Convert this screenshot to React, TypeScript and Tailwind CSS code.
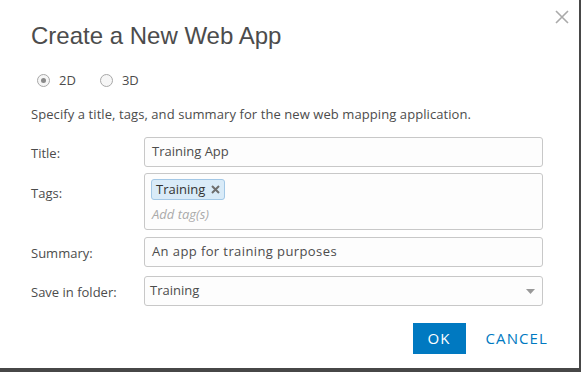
import React from 'react';

const font = { fontFamily: '"Open Sans", "Liberation Sans", sans-serif' };

function Radio({ checked, label }: { checked?: boolean; label: string }) {
    return (
        <label className="flex items-center gap-[9px] text-[13px] text-[#4c4c4c]">
            <span className="w-[13px] h-[13px] rounded-full border border-[#a8a8a8] bg-[#f6f6f6] flex items-center justify-center">
                {checked && <span className="w-[5px] h-[5px] rounded-full bg-[#8a8a8a]" />}
            </span>
            {label}
        </label>
    );
}

function Row({ label, children, className = '' }: { label: string; children: React.ReactNode; className?: string }) {
    return (
        <div className={`flex ${className}`}>
            <div className="w-[113px] shrink-0 text-[13px] text-[#4c4c4c] pt-[7px]">{label}</div>
            <div className="flex-1">{children}</div>
        </div>
    );
}

export default function App() {
    return (
        <div className="w-[581px] h-[372px] bg-[#474747] overflow-hidden" style={font}>
            <div className="relative w-[579px] h-[368px] bg-white pl-[31px] pr-[36px] pt-[20px]">
                <button className="absolute top-[9px] right-[9px] text-[#aaaaaa]">
                    <svg width="16" height="16" viewBox="0 0 16 16" stroke="currentColor" strokeWidth="1.6" fill="none">
                        <path d="M2 2 L14 14 M14 2 L2 14" />
                    </svg>
                </button>

                <h2 className="text-[24px] leading-[32px] text-[#4c4c4c]" style={{ fontFamily: '"Liberation Sans", Arial, sans-serif' }}>
                    Create a New Web App
                </h2>

                <div className="flex gap-[24px] pl-[6px] mt-[19px]">
                    <Radio checked label="2D" />
                    <Radio label="3D" />
                </div>

                <p className="text-[13px] tracking-[0.08px] text-[#4c4c4c] mt-[14px]">
                    Specify a title, tags, and summary for the new web mapping application.
                </p>

                <div className="mt-[13px] flex flex-col gap-[7px]">
                    <Row label="Title:">
                        <div className="h-[30px] border border-[#c8c8c8] rounded-[3px] px-[7px] flex items-center text-[13px] text-[#4c4c4c] bg-[#fdfdfd]">
                            Training App
                        </div>
                    </Row>
                    <Row label="Tags:" className="mt-[-1px] [&>div:first-child]:pt-[11px]">
                        <div className="h-[57px] border border-[#c8c8c8] rounded-[3px] px-[6px] pt-[2px] bg-[#fdfdfd]">
                            <span className="inline-flex items-center gap-[6px] h-[21px] px-[4px] rounded-[3px] border border-[#a3c8e6] bg-[#d9ebf8] text-[13px] text-[#333]">
                                Training
                                <svg width="9" height="9" viewBox="0 0 9 9" stroke="#6e6e6e" strokeWidth="2" fill="none">
                                    <path d="M1 1 L8 8 M8 1 L1 8" />
                                </svg>
                            </span>
                            <div className="text-[13px] italic text-[#aaaaaa] mt-[5px] pl-[1px]">Add tag(s)</div>
                        </div>
                    </Row>
                    <Row label="Summary:">
                        <div className="h-[30px] border border-[#c8c8c8] rounded-[3px] px-[7px] flex items-center text-[13px] tracking-[0.4px] text-[#4c4c4c] bg-[#fdfdfd]">
                            An app for training purposes
                        </div>
                    </Row>
                    <Row label="Save in folder:" className="mt-[2px]">
                        <div className="h-[30px] border border-[#c8c8c8] rounded-[3px] pl-[5px] pr-[7px] flex items-center justify-between text-[13px] text-[#4c4c4c] bg-[#fdfdfd]">
                            Training
                            <svg width="9" height="5" viewBox="0 0 9 5"><path d="M0 0 H9 L4.5 5 Z" fill="#999" /></svg>
                        </div>
                    </Row>
                </div>

                <div className="flex justify-end items-center gap-[20px] mt-[17px] mr-[-5px]">
                    <button className="w-[53px] h-[31px] bg-[#0079c1] text-white text-[15px] tracking-[1px]">OK</button>
                    <button className="text-[#0079c1] text-[15px] tracking-[1.1px]">CANCEL</button>
                </div>
            </div>
        </div>
    );
}
